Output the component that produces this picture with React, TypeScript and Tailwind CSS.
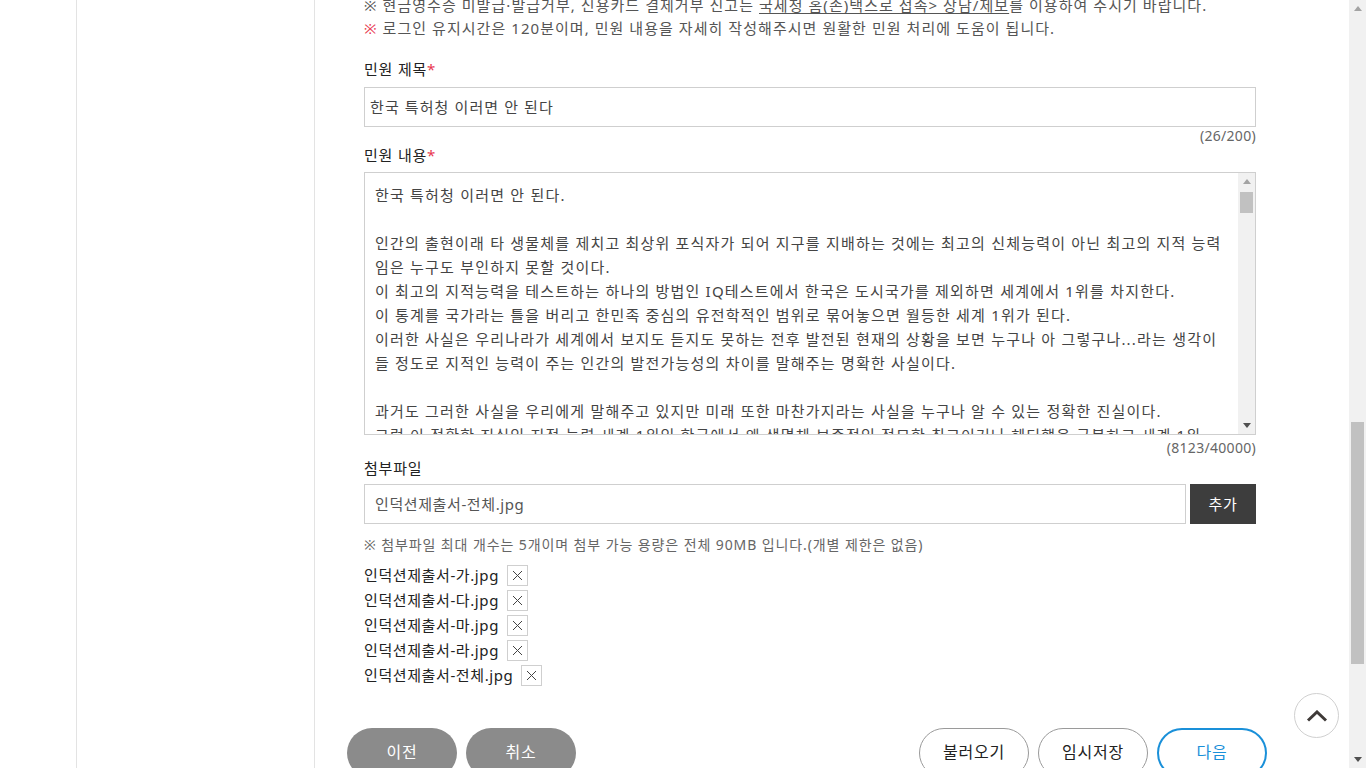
import React from 'react';

const font = "font-['Noto_Sans','Noto_Sans_CJK_KR',sans-serif]";

const bodyLines: string[] = [
  '한국 특허청 이러면 안 된다.',
  '',
  '인간의 출현이래 타 생물체를 제치고 최상위 포식자가 되어 지구를 지배하는 것에는 최고의 신체능력이 아닌 최고의 지적 능력',
  '임은 누구도 부인하지 못할 것이다.',
  '이 최고의 지적능력을 테스트하는 하나의 방법인 IQ테스트에서 한국은 도시국가를 제외하면 세계에서 1위를 차지한다.',
  '이 통계를 국가라는 틀을 버리고 한민족 중심의 유전학적인 범위로 묶어놓으면 월등한 세계 1위가 된다.',
  '이러한 사실은 우리나라가 세계에서 보지도 듣지도 못하는 전후 발전된 현재의 상황을 보면 누구나 아 그렇구나...라는 생각이',
  '들 정도로 지적인 능력이 주는 인간의 발전가능성의 차이를 말해주는 명확한 사실이다.',
  '',
  '과거도 그러한 사실을 우리에게 말해주고 있지만 미래 또한 마찬가지라는 사실을 누구나 알 수 있는 정확한 진실이다.',
  '그럼 이 정확한 진실인 지적 능력 세계 1위인 한국에서 왜 생명체 보존적인 정묘한 최고이거나 헤딩했을 극복하고 세계 1위',
];

const files = [
  '인덕션제출서-가.jpg',
  '인덕션제출서-다.jpg',
  '인덕션제출서-마.jpg',
  '인덕션제출서-라.jpg',
  '인덕션제출서-전체.jpg',
];

function Arrow({ dir, className }: { dir: 'up' | 'down'; className?: string }) {
  return (
    <svg width="8" height="5" viewBox="0 0 8 5" className={className}>
      {dir === 'up' ? <path d="M0 5 L4 0 L8 5 Z" fill="#a3a3a3" /> : <path d="M0 0 L4 5 L8 0 Z" fill="#505050" />}
    </svg>
  );
}

function CloseIcon() {
  return (
    <svg width="11" height="11" viewBox="0 0 11 11">
      <path d="M1 1 L10 10 M10 1 L1 10" stroke="#444" strokeWidth="1" />
    </svg>
  );
}

export default function App() {
  return (
    <div className={`${font} relative flex h-[768px] w-[1366px] overflow-hidden bg-white`}>
      {/* page */}
      <div className="flex w-[1349px] shrink-0">
        <div className="ml-[76px] w-[239px] shrink-0 border-x border-[#e3e3e3]" />

        <div className="-mt-[6px] w-[892px] shrink-0 pl-[49px] box-content">
          {/* notices */}
          <div className="text-[15px] leading-[23px] tracking-[1.05px] text-[#555] whitespace-nowrap">
            <p>
              ※ 현금영수증 미발급·발급거부, 신용카드 결제거부 신고는{' '}
              <span className="underline underline-offset-2">국세청 홈(손)택스로 접속&gt; 상담/제보</span>를 이용하여 주시기 바랍니다.
            </p>
            <p>
              <span className="text-[#e8384f]">※</span> 로그인 유지시간은 120분이며, 민원 내용을 자세히 작성해주시면 원활한 민원 처리에 도움이 됩니다.
            </p>
          </div>

          {/* title */}
          <label className="mt-[18px] block text-[15px] leading-[22px] tracking-[0.8px] text-[#222]">
            민원 제목<span className="text-[#e8384f]">*</span>
          </label>
          <div className="mt-[7px] flex h-[40px] items-center border border-[#cfcfcf] px-[5px] text-[15px] tracking-[1.1px] text-[#444]">
            한국 특허청 이러면 안 된다
          </div>
          <div className="text-right text-[14px] leading-[17px] tracking-[0.3px] text-[#666]">(26/200)</div>

          {/* body */}
          <label className="block text-[15px] leading-[22px] tracking-[0.8px] text-[#222]">
            민원 내용<span className="text-[#e8384f]">*</span>
          </label>
          <div className="mt-[6px] flex h-[263px] border border-[#cfcfcf]">
            <div className="flex-1 overflow-hidden pl-[10px] pt-[10px] text-[15px] leading-[24px] tracking-[1.2px] text-[#444]">
              {bodyLines.map((l, i) => (
                <div key={i} className="h-[24px] whitespace-nowrap">
                  {l}
                </div>
              ))}
            </div>
            <div className="flex w-[17px] flex-col items-center bg-[#f1f1f1] py-[6px]">
              <Arrow dir="up" />
              <div className="mt-[8px] h-[21px] w-[13px] bg-[#c1c1c1]" />
              <div className="flex-1" />
              <Arrow dir="down" />
            </div>
          </div>
          <div className="mt-[4px] text-right text-[14px] leading-[18px] tracking-[0.3px] text-[#666]">(8123/40000)</div>

          {/* files */}
          <label className="block text-[15px] leading-[22px] tracking-[0.8px] text-[#222]">첨부파일</label>
          <div className="mt-[5px] flex h-[40px] gap-[4px]">
            <div className="flex flex-1 items-center border border-[#cfcfcf] px-[10px] text-[15px] tracking-[0.6px] text-[#555]">
              인덕션제출서-전체.jpg
            </div>
            <button className="w-[66px] bg-[#3d3d3d] text-[15px] tracking-[0.8px] text-white">추가</button>
          </div>
          <p className="mt-[11px] text-[14px] leading-[20px] tracking-[0.9px] text-[#666]">
            ※ 첨부파일 최대 개수는 5개이며 첨부 가능 용량은 전체 90MB 입니다.(개별 제한은 없음)
          </p>
          <ul className="mt-[8px]">
            {files.map((f) => (
              <li key={f} className="flex h-[25px] items-center gap-[8px] text-[15px] tracking-[0.6px] text-[#222]">
                <span>{f}</span>
                <span className="flex h-[21px] w-[21px] items-center justify-center border border-[#cfcfcf]">
                  <CloseIcon />
                </span>
              </li>
            ))}
          </ul>

          {/* actions */}
          <div className="-ml-[17px] mt-[40px] flex w-[920px] text-[16px] tracking-[0.8px]">
            <div className="flex gap-[9px]">
              <button className="h-[50px] w-[110px] rounded-full bg-[#8b8b8b] pb-[3px] text-white">이전</button>
              <button className="h-[50px] w-[110px] rounded-full bg-[#8b8b8b] pb-[3px] text-white">취소</button>
            </div>
            <div className="ml-auto flex gap-[9px]">
              <button className="h-[50px] w-[110px] rounded-full border border-[#9a9a9a] pb-[3px] text-[#222]">불러오기</button>
              <button className="h-[50px] w-[110px] rounded-full border border-[#9a9a9a] pb-[3px] text-[#222]">임시저장</button>
              <button className="h-[50px] w-[110px] rounded-full border-2 border-[#1a90d9] pb-[3px] text-[#1a90d9]">다음</button>
            </div>
          </div>
        </div>
      </div>

      {/* browser scrollbar */}
      <div className="flex w-[17px] shrink-0 flex-col items-center bg-[#f1f1f1] pt-[6px] pb-[6px]">
        <Arrow dir="up" />
        <div className="mt-[411px] h-[242px] w-[13px] bg-[#c1c1c1]" />
        <div className="flex-1" />
        <Arrow dir="down" />
      </div>

      {/* top button */}
      <button className="absolute left-[1294px] top-[693px] flex h-[45px] w-[45px] items-center justify-center rounded-full border border-[#d0d0d0] bg-white">
        <svg width="22" height="12" viewBox="0 0 22 12">
          <path d="M2 10.5 L11 2 L20 10.5" fill="none" stroke="#3f3a38" strokeWidth="3" />
        </svg>
      </button>
    </div>
  );
}
